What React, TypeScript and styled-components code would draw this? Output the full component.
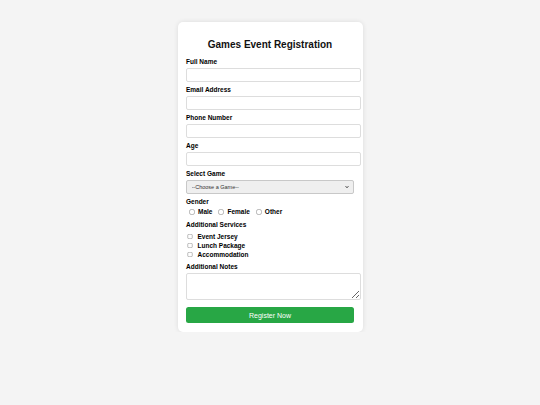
import React from "react";
import styled, { createGlobalStyle } from "styled-components";

const GlobalStyle = createGlobalStyle`
  body {
    margin: 0;
    background: #f4f4f4;
    font-family: "Liberation Sans", Arial, sans-serif;
    color: #111;
  }
`;

// the whole page is drawn at double size and shown at half scale
const Page = styled.div`
  zoom: 0.5;
  padding-top: 43px;
`;

const Card = styled.form`
  width: 370px;
  margin: 0 auto;
  padding: 17px;
  box-sizing: border-box;
  background: #fff;
  border-radius: 10px;
  box-shadow: 0 0 10px rgba(0, 0, 0, 0.1);
`;

const Title = styled.h2`
  margin: 17.5px 0 15px;
  font-size: 20px;
  line-height: 23px;
  font-weight: bold;
  text-align: center;
  color: #111;
`;

const Field = styled.div`
  margin-bottom: 8.5px;
`;

const Label = styled.label`
  display: block;
  font-size: 13px;
  line-height: 15px;
  font-weight: bold;
  margin-bottom: 4.5px;
  color: #000;
`;

const TextInput = styled.input`
  display: block;
  width: 100%;
  height: 12px;
  box-sizing: content-box;
  padding: 6px 5px;
  margin: 0;
  border: 1px solid #ddd;
  border-radius: 4px;
  font-size: 13px;
  font-family: inherit;
  outline: none;
`;

const NotesInput = styled.textarea`
  display: block;
  width: 100%;
  height: 38px;
  box-sizing: content-box;
  padding: 6px 5px;
  margin: 0;
  border: 1px solid #ddd;
  border-radius: 4px;
  font-size: 13px;
  font-family: inherit;
  outline: none;
`;

const SelectWrap = styled.div`
  position: relative;
`;

const Select = styled.select`
  display: block;
  width: 100%;
  height: 28px;
  box-sizing: border-box;
  margin: 0;
  padding: 0 0 0 9px;
  appearance: none;
  background: #efefef;
  border: 1px solid #c8c8c8;
  border-radius: 4px;
  font-size: 11px;
  font-family: inherit;
  color: #333;
`;

const Chevron = styled.svg`
  position: absolute;
  right: 10px;
  top: 10px;
  width: 8px;
  height: 8px;
  pointer-events: none;
`;

const RadioRow = styled.div`
  display: flex;
  align-items: center;
  height: 18px;
`;

const Option = styled.label`
  display: inline-flex;
  align-items: center;
  gap: 6px;
  margin-right: 6px;
  font-size: 13px;
  font-weight: bold;
  line-height: 15px;
  color: #000;
`;

const Radio = styled.input.attrs({ type: "radio" })`
  width: 12px;
  height: 12px;
  margin: 0 0 0 6px;
`;

const CheckList = styled.div`
  margin-top: 7px;
`;

const CheckRow = styled.label`
  display: flex;
  align-items: center;
  gap: 10px;
  height: 18px;
  font-size: 13px;
  font-weight: bold;
  line-height: 15px;
  color: #000;
`;

const Checkbox = styled.input.attrs({ type: "checkbox" })`
  width: 11px;
  height: 11px;
  margin: 0 0 0 2px;
`;

const SubmitButton = styled.button`
  display: block;
  width: 100%;
  height: 32px;
  margin-top: 15px;
  border: none;
  border-radius: 5px;
  background: #28a745;
  color: #fff;
  font-size: 14px;
  font-family: inherit;
  cursor: pointer;
`;

const textFields = [
  { id: "name", label: "Full Name", type: "text" },
  { id: "email", label: "Email Address", type: "email" },
  { id: "phone", label: "Phone Number", type: "tel" },
  { id: "age", label: "Age", type: "number" },
];

const services = ["Event Jersey", "Lunch Package", "Accommodation"];

export default function App() {
  return (
    <>
      <GlobalStyle />
      <Page>
        <Card onSubmit={(e) => e.preventDefault()}>
          <Title>Games Event Registration</Title>

          {textFields.map((f) => (
            <Field key={f.id}>
              <Label htmlFor={f.id}>{f.label}</Label>
              <TextInput id={f.id} type={f.type} />
            </Field>
          ))}

          <Field>
            <Label htmlFor="game">Select Game</Label>
            <SelectWrap>
              <Select id="game" defaultValue="">
                <option value="">--Choose a Game--</option>
                <option value="football">Football</option>
                <option value="basketball">Basketball</option>
                <option value="chess">Chess</option>
              </Select>
              <Chevron viewBox="0 0 10 10">
                <path d="M1.5 3 L5 6.8 L8.5 3" fill="none" stroke="#222" strokeWidth="2.2" />
              </Chevron>
            </SelectWrap>
          </Field>

          <Field>
            <Label>Gender</Label>
            <RadioRow>
              {["Male", "Female", "Other"].map((g) => (
                <Option key={g}>
                  <Radio name="gender" value={g.toLowerCase()} />
                  {g}
                </Option>
              ))}
            </RadioRow>
          </Field>

          <Field>
            <Label>Additional Services</Label>
            <CheckList>
              {services.map((s) => (
                <CheckRow key={s}>
                  <Checkbox value={s} />
                  {s}
                </CheckRow>
              ))}
            </CheckList>
          </Field>

          <Field>
            <Label htmlFor="notes">Additional Notes</Label>
            <NotesInput id="notes" />
          </Field>

          <SubmitButton type="submit">Register Now</SubmitButton>
        </Card>
      </Page>
    </>
  );
}
